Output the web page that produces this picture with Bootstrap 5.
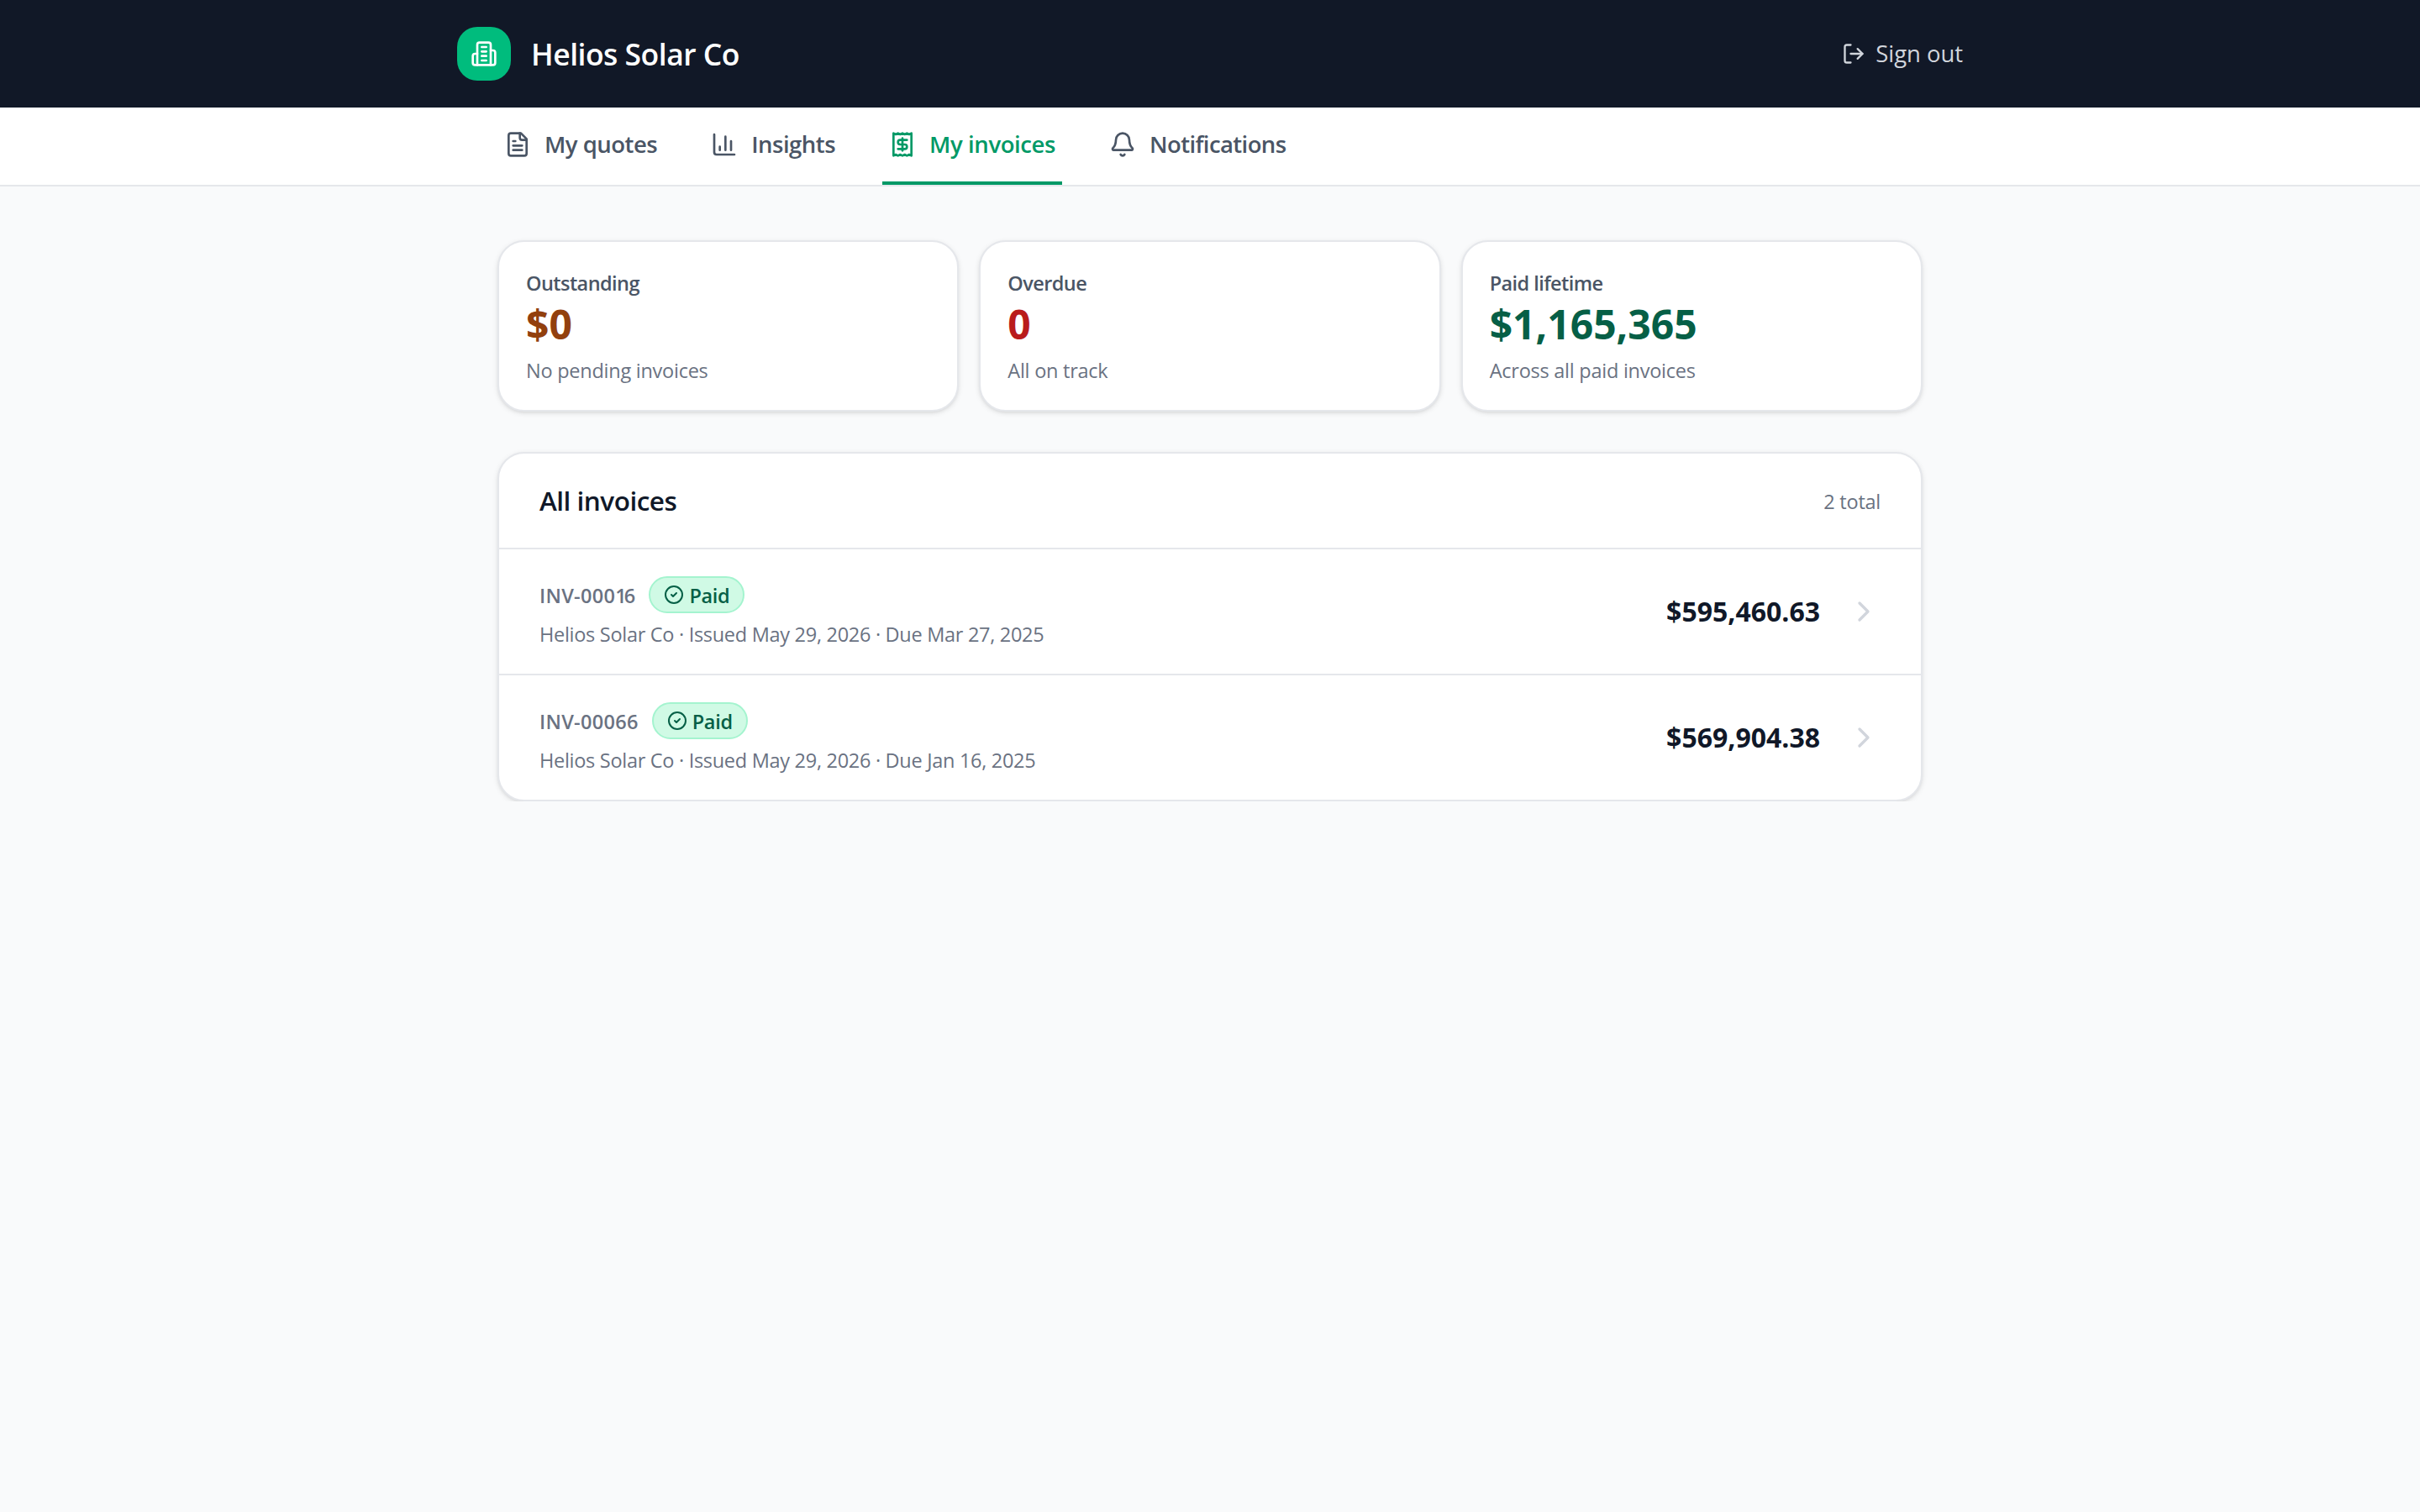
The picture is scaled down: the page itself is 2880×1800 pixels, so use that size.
<!DOCTYPE html>
<html lang="en">
<head>
    <meta charset="UTF-8">
    <meta name="viewport" content="width=device-width, initial-scale=1.0">
    <title>Helios Solar Co - My invoices</title>
    <!-- Bootstrap CSS -->
    <link href="https://cdn.jsdelivr.net/npm/bootstrap@5.3.0/dist/css/bootstrap.min.css" rel="stylesheet">
    <style>
        body {
            background: #f9fafb;
            color: #101828;
            font-family: "Segoe UI", "Open Sans", "Noto Sans", sans-serif;
            font-size: 27.5px;
            line-height: 40px;
        }
        svg { display: block; flex-shrink: 0; fill: none; stroke: currentColor; stroke-width: 2; stroke-linecap: round; stroke-linejoin: round; }
        .icon-sm { width: 24px; height: 24px; }
        .icon-md { width: 28px; height: 28px; }
        .icon-lg { width: 32px; height: 32px; }
        .icon-xl { width: 40px; height: 40px; }

        /* Header */
        .site-header { background: #111827; height: 128px; }
        .header-inner { width: 1792px; }
        .page-inner { width: 1696px; }
        .brand-logo { width: 64px; height: 64px; border-radius: 24px; background: #00bc7d; }
        .brand-name { font-size: 35.5px; letter-spacing: -.5px; }
        .sign-out { color: #d1d5dc; gap: 12px; letter-spacing: -.05px; }

        /* Tabs */
        .tab-bar { border-bottom: 2px solid #e5e7eb; }
        .tab-list { gap: 48px; }
        .tab-item { height: 92px; padding: 0 8px; gap: 16px; color: #4a5565; border-bottom: 4px solid transparent; letter-spacing: -.5px; }
        .tab-item.active { color: #096; border-color: #096; letter-spacing: -.4px; }
        .tab-item:last-child { letter-spacing: -.6px; }

        /* Cards */
        .main-area { padding-top: 64px; }
        .stat-grid { display: grid; grid-template-columns: repeat(3, 1fr); gap: 24px; }
        .panel { background: #fff; border: 2px solid #e5e7eb; border-radius: 32px; box-shadow: 0 2px 6px 0 rgba(0, 0, 0, .1), 0 2px 4px -2px rgba(0, 0, 0, .1); }
        .stat-card { padding: 33px 32px 31px; }
        .stat-label { font-size: 23.5px; line-height: 32px; color: #4a5565; letter-spacing: -.57px; }
        .stat-value { font-size: 48px; line-height: 64px; padding-top: 1px; }
        .note { font-size: 23.5px; line-height: 32px; color: #6a7282; letter-spacing: -.25px; }
        .stat-card .note { margin-top: 7px; }
        .text-amber { color: #92400e; }
        .text-red { color: #b91c1c; }
        .text-emerald { color: #065f46; }

        /* Invoice list */
        .invoice-panel { margin-top: 48px; overflow: hidden; }
        .panel-head { height: 112px; padding: 0 48px; }
        .panel-head .note { padding-top: 2px; }
        .panel-title { font-size: 31.5px; line-height: 48px; letter-spacing: -.5px; }
        .invoice-row { padding: 32px 48px 31px; height: 150px; border-top: 2px solid #e5e7eb; color: inherit; }
        .invoice-no { font-size: 23.5px; line-height: 32px; padding-top: 2px; color: #6a7282; letter-spacing: .3px; }
        .digit-tight { letter-spacing: -3px; }
        .status-pill { height: 44px; padding: 0 16px; gap: 6px; border: 2px solid #a4f4cf; border-radius: 22px; background: #d0fae5; color: #065f46; font-size: 23.5px; line-height: 32px; letter-spacing: -.3px; }
        .status-pill span { padding-top: 2px; }
        .invoice-row .note { margin-top: 9px; letter-spacing: -.29px; }
        .row-end { gap: 32px; padding-bottom: 1px; }
        .amount { font-size: 32px; line-height: 48px; margin-top: -1px; }
        .chevron { color: #d1d5dc; }
    </style>
</head>
<body>
    <!-- Header -->
    <header class="site-header d-flex align-items-center">
        <div class="header-inner mx-auto d-flex align-items-center justify-content-between">
            <div class="d-flex align-items-center gap-4 text-white">
                <div class="brand-logo d-flex align-items-center justify-content-center">
                    <svg class="icon-lg" viewBox="0 0 24 24"><path d="M6 22V4a2 2 0 0 1 2-2h8a2 2 0 0 1 2 2v18Z"/><path d="M6 12H4a2 2 0 0 0-2 2v6a2 2 0 0 0 2 2h2"/><path d="M18 9h2a2 2 0 0 1 2 2v9a2 2 0 0 1-2 2h-2"/><path d="M10 6h4M10 10h4M10 14h4M10 18h4"/></svg>
                </div>
                <span class="brand-name fw-semibold">Helios Solar Co</span>
            </div>
            <a href="#" class="sign-out d-flex align-items-center text-decoration-none">
                <svg class="icon-md" viewBox="0 0 24 24"><path d="m16 17 5-5-5-5"/><path d="M21 12H9"/><path d="M9 21H5a2 2 0 0 1-2-2V5a2 2 0 0 1 2-2h4"/></svg>
                <span>Sign out</span>
            </a>
        </div>
    </header>

    <!-- Tabs -->
    <nav class="tab-bar bg-white">
        <div class="tab-list page-inner mx-auto d-flex">
            <a href="#" class="tab-item d-flex align-items-center fw-semibold text-decoration-none">
                <svg class="icon-lg" viewBox="0 0 24 24"><path d="M15 2H6a2 2 0 0 0-2 2v16a2 2 0 0 0 2 2h12a2 2 0 0 0 2-2V7Z"/><path d="M14 2v4a2 2 0 0 0 2 2h4"/><path d="M10 9H8M16 13H8M16 17H8"/></svg>
                <span>My quotes</span>
            </a>
            <a href="#" class="tab-item d-flex align-items-center fw-semibold text-decoration-none">
                <svg class="icon-lg" viewBox="0 0 24 24"><path d="M3 3v16a2 2 0 0 0 2 2h16"/><path d="M18 17V9M13 17V5M8 17v-3"/></svg>
                <span>Insights</span>
            </a>
            <a href="#" class="tab-item active d-flex align-items-center fw-semibold text-decoration-none">
                <svg class="icon-lg" viewBox="0 0 24 24"><path d="M4 2v20l2-1 2 1 2-1 2 1 2-1 2 1 2-1 2 1V2l-2 1-2-1-2 1-2-1-2 1-2-1-2 1Z"/><path d="M16 8h-6a2 2 0 1 0 0 4h4a2 2 0 1 1 0 4H8"/><path d="M12 17.5v-11"/></svg>
                <span>My invoices</span>
            </a>
            <a href="#" class="tab-item d-flex align-items-center fw-semibold text-decoration-none">
                <svg class="icon-lg" viewBox="0 0 24 24"><path d="M10.268 21a2 2 0 0 0 3.464 0"/><path d="M3.262 15.326A1 1 0 0 0 4 17h16a1 1 0 0 0 .74-1.673C19.41 13.956 18 12.499 18 8A6 6 0 0 0 6 8c0 4.499-1.411 5.956-2.738 7.326"/></svg>
                <span>Notifications</span>
            </a>
        </div>
    </nav>

    <!-- Main content -->
    <main class="main-area page-inner mx-auto">
        <div class="stat-grid">
            <div class="panel stat-card">
                <div class="stat-label fw-semibold">Outstanding</div>
                <div class="stat-value fw-bold text-amber">$0</div>
                <div class="note">No pending invoices</div>
            </div>
            <div class="panel stat-card">
                <div class="stat-label fw-semibold">Overdue</div>
                <div class="stat-value fw-bold text-red">0</div>
                <div class="note">All on track</div>
            </div>
            <div class="panel stat-card">
                <div class="stat-label fw-semibold">Paid lifetime</div>
                <div class="stat-value fw-bold text-emerald">$1,165,365</div>
                <div class="note">Across all paid invoices</div>
            </div>
        </div>

        <section class="panel invoice-panel">
            <div class="panel-head d-flex align-items-center justify-content-between">
                <h2 class="panel-title fw-semibold mb-0">All invoices</h2>
                <span class="note">2 total</span>
            </div>
            <a href="#" class="invoice-row d-flex align-items-center justify-content-between text-decoration-none">
                <div>
                    <div class="d-flex align-items-center gap-3">
                        <span class="invoice-no fw-semibold">INV-000<span class="digit-tight">1</span>6</span>
                        <span class="status-pill d-flex align-items-center fw-semibold">
                            <svg class="icon-sm" viewBox="0 0 24 24"><circle cx="12" cy="12" r="10"/><path d="m9 12 2 2 4-4"/></svg>
                            <span>Paid</span>
                        </span>
                    </div>
                    <div class="note">Helios Solar Co · Issued May 29, 2026 · Due Mar 27, 2025</div>
                </div>
                <div class="row-end d-flex align-items-center">
                    <span class="amount fw-bold">$595,460.63</span>
                    <svg class="icon-xl chevron" viewBox="0 0 24 24"><path d="m9 18 6-6-6-6"/></svg>
                </div>
            </a>
            <a href="#" class="invoice-row d-flex align-items-center justify-content-between text-decoration-none">
                <div>
                    <div class="d-flex align-items-center gap-3">
                        <span class="invoice-no fw-semibold">INV-00066</span>
                        <span class="status-pill d-flex align-items-center fw-semibold">
                            <svg class="icon-sm" viewBox="0 0 24 24"><circle cx="12" cy="12" r="10"/><path d="m9 12 2 2 4-4"/></svg>
                            <span>Paid</span>
                        </span>
                    </div>
                    <div class="note">Helios Solar Co · Issued May 29, 2026 · Due Jan 16, 2025</div>
                </div>
                <div class="row-end d-flex align-items-center">
                    <span class="amount fw-bold">$569,904.38</span>
                    <svg class="icon-xl chevron" viewBox="0 0 24 24"><path d="m9 18 6-6-6-6"/></svg>
                </div>
            </a>
        </section>
    </main>

    <!-- Bootstrap JS -->
    <script src="https://cdn.jsdelivr.net/npm/bootstrap@5.3.0/dist/js/bootstrap.bundle.min.js"></script>
</body>
</html>
